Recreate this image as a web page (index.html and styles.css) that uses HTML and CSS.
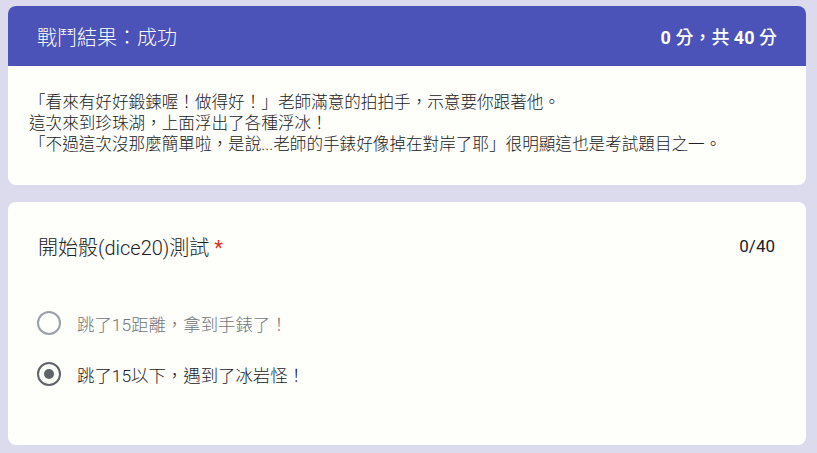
FILE: index.html
```html
<!DOCTYPE html>
<html>
	<head>
		<meta charset="utf-8">
		<link rel="stylesheet" href="styles.css">
	</head>
	<body>
		<div class="card result">
			<div class="result-head">
				<span class="result-title">戰鬥結果：成功</span>
				<span class="result-score"><b>0</b> 分，共 <b>40</b> 分</span>
			</div>
			<div class="result-body">
				「看來有好好鍛鍊喔！做得好！」老師滿意的拍拍手，示意要你跟著他。<br/>
				這次來到珍珠湖，上面浮出了各種浮冰！<br/>
				「不過這次沒那麼簡單啦，是說...老師的手錶好像掉在對岸了耶」很明顯這也是考試題目之一。
			</div>
		</div>

		<div class="card question">
			<div class="question-head">
				<span class="question-title">開始骰(dice20)測試 <span class="required">*</span></span>
				<span class="question-points">0/40</span>
			</div>
			<div class="options">
				<div class="option">
					<span class="radio"></span>
					<span class="option-label muted">跳了15距離，拿到手錶了！</span>
				</div>
				<div class="option">
					<span class="radio checked"></span>
					<span class="option-label">跳了15以下，遇到了冰岩怪！</span>
				</div>
			</div>
		</div>
	</body>
</html>
```

FILE: styles.css
```css
body {
	margin: 0;
	padding: 6px 11px 7px 8px;
	background-color: #dcdaed;
	font-family: Roboto, "Noto Sans CJK TC", sans-serif;
	color: #202124;
}

.card {
	background-color: #fefefb;
	border-radius: 8px;
	overflow: hidden;
}

.result {
	margin-bottom: 17px;
}

.result-head {
	height: 60px;
	display: flex;
	align-items: center;
	justify-content: space-between;
	padding: 0 29px 0 29px;
	background-color: #4b52b8;
	color: #ffffff;
}

.result-title {
	font-size: 20px;
	font-weight: 300;
}

.result-score {
	font-size: 18px;
	font-weight: 500;
}

.result-score b {
	font-weight: 700;
}

.result-body {
	padding: 26px 21px 30px 21px;
	font-size: 16.6px;
	font-weight: 300;
	line-height: 21px;
	color: #202124;
}

.question {
	height: 243px;
	padding: 30px 31px 0 30px;
	box-sizing: border-box;
}

.question-head {
	display: flex;
	justify-content: space-between;
	align-items: center;
	height: 28px;
}

.question-title {
	font-size: 20px;
	font-weight: 300;
}

.required {
	color: #d93025;
	font-weight: 400;
}

.question-points {
	font-size: 17px;
}

.options {
	margin-top: 52px;
	display: flex;
	flex-direction: column;
	gap: 29px;
}

.option {
	display: flex;
	align-items: center;
	height: 22px;
}

.radio {
	width: 20px;
	height: 20px;
	border: 2px solid #9aa0a6;
	border-radius: 50%;
	margin: 0 16px 0 -1px;
	position: relative;
}

.radio.checked {
	border-color: #5f6368;
}

.radio.checked::after {
	content: "";
	position: absolute;
	left: 5px;
	top: 5px;
	width: 10px;
	height: 10px;
	border-radius: 50%;
	background-color: #5f6368;
}

.option-label {
	font-size: 17.4px;
	font-weight: 300;
}

.option-label.muted {
	color: #70757a;
}
```
